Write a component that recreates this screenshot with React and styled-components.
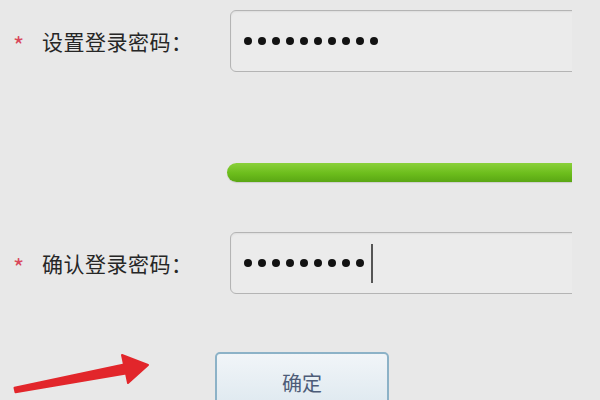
import styled, { createGlobalStyle } from 'styled-components'

const GlobalStyle = createGlobalStyle`
    body {
        margin: 0;
        background: #e8e8e8;
        font-family: "Noto Sans CJK SC", "Noto Sans", sans-serif;
    }
`

const Frame = styled.div`
    width: 572px;
    overflow: hidden;
    padding-top: 10px;
    display: flex;
    flex-direction: column;
    & > * {
        flex: none;
    }
`

const FieldRow = styled.div`
    display: grid;
    grid-template-columns: 230px 1fr;
    align-items: center;
    height: 62px;
    margin-top: ${p => p.$top || 0}px;
`

const Label = styled.label`
    display: flex;
    align-items: center;
    padding-left: 13px;
    font-size: 21px;
    letter-spacing: 0.5px;
    color: #262626;
    white-space: nowrap;
`

const Star = styled.span`
    width: 29px;
    color: #d9475a;
    font-size: 24px;
    line-height: 1;
    padding-top: 8px;
`

const PasswordBox = styled.div`
    box-sizing: border-box;
    width: 400px;
    height: 62px;
    border: 1.5px solid #b4b4b4;
    border-radius: 6px;
    background: #ebebeb;
    box-shadow: inset 0 1px 2px rgba(0, 0, 0, 0.06);
    display: flex;
    align-items: center;
    gap: 6px;
    padding-left: 13px;
`

const Dot = styled.span`
    width: 8px;
    height: 8px;
    border-radius: 50%;
    background: #121212;
`

const Caret = styled.span`
    width: 2px;
    height: 39px;
    margin-left: 1px;
    background: #555;
`

const StrengthBar = styled.div`
    margin: 91px 0 0 227px;
    height: 19px;
    border-radius: 10px 0 0 10px;
    background: linear-gradient(#8ad03a, #6cbd1c 55%, #5aa614);
    box-shadow: 0 1px 1px rgba(0, 0, 0, 0.12);
`

const ButtonRow = styled.div`
    display: flex;
    align-items: flex-start;
    margin-top: 58px;
`

const Arrow = styled.svg`
    flex: none;
    width: 160px;
    height: 45px;
`

const ConfirmButton = styled.button`
    box-sizing: border-box;
    width: 174px;
    height: 60px;
    margin-left: 55px;
    border: 2px solid #8cb2c7;
    border-radius: 5px;
    background: linear-gradient(#f1f5f8, #dde8ef);
    color: #4d5c78;
    font-family: inherit;
    font-size: 20px;
    padding: 0;
`

const PasswordField = ({ label, count, focused }) => (
    <>
        <Label>
            <Star>*</Star>
            {label}
        </Label>
        <PasswordBox>
            {Array.from({ length: count }, (_, i) => <Dot key={i} />)}
            {focused && <Caret />}
        </PasswordBox>
    </>
)

const App = () => {
    return (
        <>
            <GlobalStyle />
            <Frame>
                <FieldRow>
                    <PasswordField label="设置登录密码：" count={10} />
                </FieldRow>
                <StrengthBar />
                <FieldRow $top={50}>
                    <PasswordField label="确认登录密码：" count={9} focused />
                </FieldRow>
                <ButtonRow>
                    <Arrow viewBox="0 0 160 45">
                        <path
                            d="M14.5 35.8 L124 12.6 L122 3 L148 13 L128 31 L126 21.4 L15.5 40.2 Z"
                            fill="#e2262b"
                            stroke="#e2262b"
                            strokeWidth="2"
                            strokeLinejoin="round"
                        />
                    </Arrow>
                    <ConfirmButton>确定</ConfirmButton>
                </ButtonRow>
            </Frame>
        </>
    )
}

export default App
